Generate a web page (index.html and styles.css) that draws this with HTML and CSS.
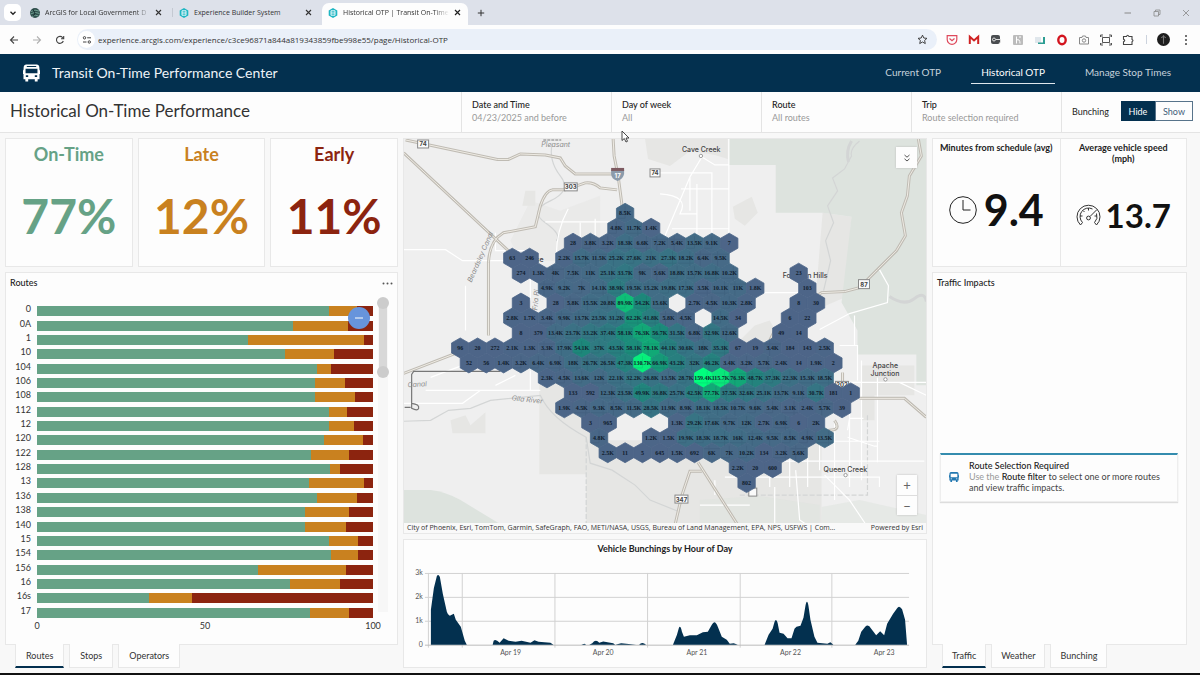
FILE: index.html
```html
<!DOCTYPE html>
<html lang="en">
<head>
<meta charset="utf-8">
<title>Historical OTP | Transit On-Time Performance Center</title>
<link rel="stylesheet" href="styles.css">
</head>
<body>
<div class="browser">
  <div class="tabstrip">
    <button class="tab-search" aria-label="Search tabs"><svg width="8" height="8" viewBox="0 0 8 8"><path d="M1.5 2.8 4 5.3 6.5 2.8" fill="none" stroke="#222" stroke-width="1.3"/></svg></button>
    <div class="btab">
      <svg class="favicon" viewBox="0 0 10 10"><circle cx="5" cy="5" r="5" fill="#2f4f4c"/><path d="M1 3.5Q5 1 9 3M.5 6Q5 3 9.5 5.5M2 8.500Q5 6 8.500 8" stroke="#7fb3a2" stroke-width=".8" fill="none"/><path d="M3 1.500 5 5 3.500 8" stroke="#14302f" fill="none"/></svg>
      <span class="btab-title faded">ArcGIS for Local Government D</span>
      <button class="x" aria-label="Close tab"><svg width="7" height="7" viewBox="0 0 7 7"><path d="M1 1 6 6M6 1 1 6" stroke="#333" stroke-width="1.1"/></svg></button>
    </div>
    <div class="btab split">
      <svg class="favicon" viewBox="0 0 10 10"><path d="M5 0 9.300 2.500V7.500L5 10 .7 7.500V2.500Z" fill="#1fb6c3"/><path d="M3 2.800H7V7.200H3ZM3 5H7" stroke="#fff" fill="none" stroke-width=".9"/></svg>
      <span class="btab-title">Experience Builder System</span>
      <button class="x" aria-label="Close tab"><svg width="7" height="7" viewBox="0 0 7 7"><path d="M1 1 6 6M6 1 1 6" stroke="#333" stroke-width="1.1"/></svg></button>
    </div>
    <div class="btab current">
      <svg class="favicon" viewBox="0 0 10 10"><path d="M5 0 9.300 2.500V7.500L5 10 .7 7.500V2.500Z" fill="#1fb6c3"/><path d="M3 2.800H7V7.200H3ZM3 5H7" stroke="#fff" fill="none" stroke-width=".9"/></svg>
      <span class="btab-title faded">Historical OTP | Transit On-Time</span>
      <button class="x" aria-label="Close tab"><svg width="7" height="7" viewBox="0 0 7 7"><path d="M1 1 6 6M6 1 1 6" stroke="#222" stroke-width="1.2"/></svg></button>
    </div>
    <button class="newtab" aria-label="New tab"><svg width="8" height="8" viewBox="0 0 8 8"><path d="M4 .8V7.200M.8 4H7.200" stroke="#333"/></svg></button>
    <div class="winctl">
      <button aria-label="Minimize"><svg width="8" height="8" viewBox="0 0 8 8"><path d="M.5 4H7" stroke="#888"/></svg></button>
      <button aria-label="Restore"><svg width="8" height="8" viewBox="0 0 8 8"><path d="M1 2.500H5.500V7H1ZM2.500 2.500V1H7V5.500H5.500" stroke="#888" fill="none" stroke-width=".8"/></svg></button>
      <button aria-label="Close window"><svg width="8" height="8" viewBox="0 0 8 8"><path d="M1 1 7 7M7 1 1 7" stroke="#888" stroke-width=".8"/></svg></button>
    </div>
  </div>
  <div class="toolbar">
    <button aria-label="Back"><svg width="10" height="10" viewBox="0 0 10 10"><path d="M9 5H1.500M5 1.500 1.500 5 5 8.500" stroke="#444" stroke-width="1.1" fill="none"/></svg></button>
    <button aria-label="Forward"><svg width="10" height="10" viewBox="0 0 10 10"><path d="M1 5H8.500M5 1.500 8.500 5 5 8.500" stroke="#b0b0b0" stroke-width="1.100" fill="none"/></svg></button>
    <button aria-label="Reload"><svg width="10" height="10" viewBox="0 0 10 10"><path d="M8.300 6A3.500 3.500 0 1 1 7.600 2.500L8.500 3.500M8.700 1V3.800H6" stroke="#444" stroke-width="1.100" fill="none"/></svg></button>
    <label class="address">
      <span class="site"><svg width="10" height="10" viewBox="0 0 10 10"><g stroke="#444" fill="none"><circle cx="2.500" cy="2.800" r="1.200"/><path d="M5.200 2.800H9M1 7H4.500"/><circle cx="7.300" cy="7" r="1.200"/></g></svg></span>
      <input class="url" type="text" aria-label="Address" value="experience.arcgis.com/experience/c3ce96871a844a819343859fbe998e55/page/Historical-OTP">
      <svg width="11" height="11" viewBox="0 0 24 24"><path d="m12 2.500 2.900 6.300 6.800.7-5.100 4.600 1.500 6.800L12 17.400l-6.100 3.500 1.500-6.800L2.300 9.500l6.800-.7Z" fill="none" stroke="#333" stroke-width="2"/></svg>
    </label>
    <div class="extensions">
      <svg viewBox="0 0 12 12"><path d="M1.200 1.700H10.800V5.500A4.800 4.800 0 0 1 1.200 5.500Z" fill="none" stroke="#df4a5c" stroke-width="1.200"/><path d="M3.500 4.500 6 6.800 8.500 4.500" fill="none" stroke="#df4a5c" stroke-width="1.200"/></svg>
      <svg viewBox="0 0 12 12"><path d="M1.800 10V2.800L6 6.500 10.200 2.800V10" fill="none" stroke="#cf2222" stroke-width="2"/></svg>
      <svg viewBox="0 0 12 12"><rect x="1" y="1" width="9" height="9" rx="2" fill="#4a4d50"/><circle cx="4" cy="5.500" r="1.500" fill="none" stroke="#fff" stroke-width=".8"/><path d="M6 5.500H10.500V8L9 10" stroke="#ddd" fill="none"/></svg>
      <svg viewBox="0 0 12 12"><rect x="1" y="1" width="10" height="10" rx="1" fill="#bcbcbc"/><path d="M4.500 2.500V9.500M4.500 6Q8 4.500 8 9.500M7 3H9" stroke="#fff" fill="none"/></svg>
      <svg viewBox="0 0 12 12"><path d="M1 3H7V9H1Z" fill="#e0e7ec"/><path d="M9 3H11V10H4V8.500H9Z" fill="#2d9e93"/></svg>
      <svg viewBox="0 0 12 12"><ellipse cx="6" cy="6" rx="3.700" ry="4.200" fill="none" stroke="#d3151f" stroke-width="2.400"/></svg>
      <svg viewBox="0 0 12 12"><path d="M1.500 3.500H4L4.500 2H7.500L8 3.500H10.500V10H1.500Z" fill="none" stroke="#888"/><circle cx="6" cy="6.500" r="1.700" fill="none" stroke="#888"/></svg>
      <svg viewBox="0 0 12 12"><path d="M2.500 3.500H9.500V8.500H2.500ZM.5 3V1H3M11.500 3V1H9M.5 9V11H3M11.500 9V11H9M1 1.500 3 3.500M11 1.500 9 3.500M1 10.500 3 8.500M11 10.500 9 8.500" fill="none" stroke="#555"/></svg>
      <svg viewBox="0 0 12 12"><path d="M1.500 2.500H4.500Q5.500 0 7 2.500H10V5.500Q12 6.500 10 7.700V10.500H1.500V7.800Q4 6.500 1.500 5.200Z" fill="none" stroke="#444" stroke-width="1.100"/></svg>
      <i class="sep"></i>
      <svg class="avatar" viewBox="0 0 12 12"><circle cx="6" cy="6" r="6" fill="#1d1d1d"/><path d="M6 2V10M4 4.500Q6 2 8 4.500" stroke="#777" fill="none"/></svg>
      <svg viewBox="0 0 12 12"><g fill="#444"><circle cx="6" cy="2" r="1"/><circle cx="6" cy="6" r="1"/><circle cx="6" cy="10" r="1"/></g></svg>
    </div>
  </div>
</div>

<header class="app-header">
  <svg class="bus" viewBox="0 0 18 18"><path fill="#fff" fill-rule="evenodd" d="M3.500 0H14.500Q17 0 17.300 3L17.500 6H18V10H17.500V15.500H15.500V18H12.500V15.500H5.500V18H2.500V15.500H.5V10H0V6H.5L.7 3Q1 0 3.500 0ZM4 1.700V2.600H14V1.700ZM2.700 4.500V9.300H15.300V4.500ZM3 11.500V13.200H5.500V11.500ZM12.500 11.500V13.200H15V11.500Z"/></svg>
  <div class="app-name">Transit On-Time Performance Center</div>
  <nav class="app-nav">
    <a href="#">Current OTP</a>
    <a href="#" class="on" aria-current="page">Historical OTP</a>
    <a href="#">Manage Stop Times</a>
  </nav>
</header>

<section class="filters">
  <h1>Historical On-Time Performance</h1>
  <button class="filter"><b>Date and Time</b><span>04/23/2025 and before</span></button>
  <button class="filter"><b>Day of week</b><span>All</span></button>
  <button class="filter"><b>Route</b><span>All routes</span></button>
  <button class="filter"><b>Trip</b><span>Route selection required</span></button>
  <div class="bunching"><span>Bunching</span><div class="toggle"><button class="on">Hide</button><button>Show</button></div></div>
  <svg class="pointer" width="9" height="13" viewBox="0 0 9 13"><path d="M1 1V10.500L3.300 8.500 5 12 6.500 11.300 5 8H8Z" fill="#fff" stroke="#333" stroke-width=".9"/></svg>
</section>

<main class="board">
  <div class="col">
    <div class="kpis">
      <div class="card kpi green"><h2>On-Time</h2><strong>77%</strong></div>
      <div class="card kpi amber"><h2>Late</h2><strong>12%</strong></div>
      <div class="card kpi red"><h2>Early</h2><strong>11%</strong></div>
    </div>
    <div class="card panel">
      <div class="panel-head"><h3>Routes</h3><button class="more" aria-label="Chart options"><svg width="11" height="3" viewBox="0 0 11 3"><g fill="#555"><circle cx="1.500" cy="1.500" r="1"/><circle cx="5.500" cy="1.500" r="1"/><circle cx="9.500" cy="1.500" r="1"/></g></svg></button></div>
      <div class="chart">
        <div class="plot">
          <div id="bars" class="bars"></div>
          <div class="axis"><span>0</span><span>50</span><span>100</span></div>
        </div>
        <div class="slider"><div class="thumb"></div></div>
        <button class="zoomout" aria-label="Zoom out"><svg width="8" height="2" viewBox="0 0 8 2"><path d="M0 1H8" stroke="#fff"/></svg></button>
      </div>
    </div>
    <div class="tabs"><button class="on">Routes</button><button>Stops</button><button>Operators</button></div>
  </div>

  <div class="col">
    <div class="card map">
      <svg class="canvas" viewBox="403 138 524 395" preserveAspectRatio="xMidYMid slice" role="img" aria-label="Map of vehicle stops around Phoenix">
        <rect x="403" y="138" width="524" height="395" fill="#efefef"/>
        <g fill="#e6e6e4">
          <path d="M539 370H600V523H586V474H539Z"/>
          <path d="M586 440H822V533H586Z"/>
          <path d="M852 216 845 297 815 310 823 212Z"/>
          <path d="M645 138H728V158L715 154 690 150 670 165 648 158Z"/>
          <path d="M733 206 752 196 758 212 745 225 735 218Z"/>
          <path d="M725 355H790L770 320 755 325Z"/>
          <path d="M862 365H915V395H875V420H862Z"/>
          <path d="M510 240 530 200 560 210 600 195V260H520Z" opacity=".5"/>
          <path d="M525 190H535V205H522ZM450 420 465 415 470 425 485 412V433H452Z"/>
        </g>
        <g fill="#dde3de">
          <path d="M729 138H927V385H917V354H858V330L842 302 852 216 823 212H776V164H729Z"/>
          <path d="M403 490H430Q446 492 460 500L498 523V533H403Z"/>
          <path d="M822 507 860 500 927 515V533H822Z" opacity=".5"/>
          <path d="M700 500 760 496 820 505V533H700Z" opacity=".5"/>
        </g>
        <g fill="none" stroke="#d3d5d5" stroke-width="1.200">
          <path d="M552 142Q548 160 560 175T550 200 545 222 556 240"/>
          <path d="M860 140Q850 148 852 155L845 168 833 177 838 190 828 205 834 222 826 240 831 260 824 290"/>
          <path d="M403 421 430 420 448 410 470 408 490 400 540 395Q550 418 586 437L590 463 612 470 635 485 650 500 680 512"/>
          <path d="M890 296Q905 306 915 298T927 301" stroke-width="3"/>
          <path d="M852 140Q846 150 849 161" stroke-width="3"/>
          <path d="M586 437V523M868 415V495H740" stroke-dasharray="5 2"/>
        </g>
        <g fill="none" stroke="#fff" stroke-width="1.200">
          <path d="M403 249H445L462 260H510M729 138V300M660 172H712V232M681 188H729M672 228H729M690 176 665 235M702 156 690 176V210M697 183V235M660 193Q690 195 680 213H697M702 156 715 164H729"/>
          <path d="M465 285V330M545 221H620M556 255Q556 230 568 208M580 222V255M595 218V240M530 258V300M495 232V250H530"/>
          <path d="M740 292H800M880 269 889 285 888 302 850 313 820 329M855 315V345"/>
          <path d="M403 403H462L480 390H520M425 390H540M430 377 462 365M495 385 515 375M530 370V390"/>
          <path d="M725 477H880V487M740 461H925M733 441H880M770 450V487M790 440V487M808 455V487M820 437V470M835 420V500M850 400V487M862 360V480M878 377V462M715 480V495M775 487V533M700 505H750M848 437 875 446H878M850 382H927M840 345H858V380M864 418H850L848 430M900 382 927 395"/>
          <path d="M825 475 850 500 870 530M796 470 800 520 815 530"/>
        </g>
        <g class="roads casing">
          <path id="r1" d="M405 139 497 158.500H508L520 153 545 154 560 157 565 165 575 173H614"/>
          <path id="r2" d="M403 152 509 251M403 373 455 353"/>
          <path id="r3" d="M488 335V262Q489 240 503 232L535 226 540 205Q545 190 552 189H565L585 182Q593 181 600 187L617 189"/>
          <path id="r4" d="M613 138 614 155 618 175 622 205"/>
          <path id="r5" d="M919 138 922 155 910 175 908 195 902 212 906 235 897 250 878 269 860 287 845 291 822 292 795 310"/>
          <path id="r6" d="M675 525 682 495 690 471H702M698 462 738 525M860 398H905L927 417M835 420Q842 430 830 430L822 440M770 340 775 330M843 372V385"/>
        </g>
        <g class="roads fill"><use href="#r1"/><use href="#r2"/><use href="#r3"/><use href="#r4"/><use href="#r5"/><use href="#r6"/></g>
        <path d="M404 407H410M411 408V403Q419 404 418 408 417 411 411 408ZM411 403V374L413 371H500" fill="none" stroke="#777" stroke-width="1.200"/>
        <g class="river">
          <text x="541" y="146">Pleasant</text>
          <text transform="translate(471 282) rotate(-66)">Beardsley Canal</text>
          <text transform="translate(407 387) rotate(-4)">Canal</text>
          <text transform="translate(511 400) rotate(6)">Gila River</text>
          <text transform="translate(537 310) rotate(-85)">Fria Ri</text>
        </g>
        <path d="M543 139H561" stroke="#a3a3a3" stroke-width="1.500" stroke-dasharray="3 1"/>
        <g class="place">
          <text x="682" y="151">Cave Creek</text>
          <text x="783" y="277">Fountain Hills</text>
          <text x="873" y="368">Apache</text><text x="871" y="376">Junction</text>
          <text x="824" y="472">Queen Creek</text>
          <text x="515" y="261">Surprise</text>
        </g>
        <g fill="#fff" stroke="#888" stroke-width=".8"><circle cx="701" cy="155" r="1.700"/><circle cx="886" cy="379" r="1.700"/><circle cx="846" cy="475" r="1.700"/></g>
        <g class="shield">
          <rect x="417" y="139" width="11" height="8"/><text x="422.500" y="145.500">74</text>
          <rect x="650" y="168" width="10" height="8"/><text x="655" y="174.500">74</text>
          <rect x="564" y="182" width="13" height="8"/><text x="570.500" y="188.500">303</text>
          <rect x="859" y="279" width="11" height="9"/><text x="864.500" y="286">87</text>
          <rect x="675" y="495" width="13" height="8"/><text x="681.500" y="501.500">347</text>
          <rect x="836" y="381" width="13" height="7"/><text x="842.500" y="387">202</text>
          <rect x="749" y="488" width="8" height="8"/>
        </g>
        <path d="M611 169H624V173Q623 178 617.500 180 611 178 611 173Z" fill="#8c9bab"/><path d="M611 167H624V170H611Z" fill="#7d5a60"/><text x="617.500" y="177" class="interstate">17</text>
        <g id="hexes"></g>
        <g id="streets" class="streets"></g>
        <g id="counts" class="counts"></g>
      </svg>
      <button class="expand" aria-label="Expand legend"><svg width="10" height="10" viewBox="0 0 10 10"><path d="M2.500 2 5 4.200 7.500 2M2.500 5.800 5 8 7.500 5.800" fill="none" stroke="#555"/></svg></button>
      <div class="mapzoom"><button aria-label="Zoom in">+</button><button aria-label="Zoom out">−</button></div>
      <div class="credit"><span>City of Phoenix, Esri, TomTom, Garmin, SafeGraph, FAO, METI/NASA, USGS, Bureau of Land Management, EPA, NPS, USFWS | Com…</span><span>Powered by Esri</span></div>
    </div>
    <div class="card hourly">
      <h3>Vehicle Bunchings by Hour of Day</h3>
      <svg viewBox="403 562 524 98" role="img" aria-label="Area chart of bunchings by hour">
        <path d="M424 573.500H910M424 597.500H910M424 621.500H910M427.500 573V648M461.500 573V648M554.500 573V648M647.500 573V648M740.500 573V648M832.500 573V648" stroke="#d2d2d2" fill="none"/>
        <path d="M424 645.500H910" stroke="#bbb"/>
        <path fill="#03304f" d="M430 645V610L433 588 436 576Q437.500 573.500 439 577L442 594 446 612Q448 617 450 615.500L453 614 455 620 460 627 464 641 466 645Z
          M492 645 493 641Q495 639 499 643L503 638.500 508 641 515 642 521 641 530 643 534 640.500 538 642 550 643 553 645Z
          M581 645 584 644 586 645ZM589 645 592 643.500Q595.500 639 599 643L603 641.800 613 643.500 615 645 621 643.500 636 645ZM639 645Q642 641.500 646 645Z
          M673 645 677 635 679 628Q680.500 625 682 632L684 637 690 635.500H697L703 632.500 708 632 712 625Q715 619 718 627L722 637 727 640 730 644 734 643.500 738 645Z
          M765 645 769 635 773 629 775 622Q776.500 618 778 623L780 633 784 634 788 638.500H792L795 629 797 627 801 626 804 618 806 606Q807.500 598 809 606L811 620 815 637 818 643 828 644 831 642.500 834 645Z
          M856 645 859 641 862 632 866 627Q869 623.500 872 629L877 635.500 881 631.500 885 635.500 888 624 894 614 898 608.500Q900 605 903 609.500L906 620 908 645Z"/>
        <g class="ticks"><g text-anchor="end"><text x="422" y="575">3k</text><text x="422" y="599">2k</text><text x="422" y="623">1k</text><text x="422" y="647">0</text></g>
        <g text-anchor="middle"><text x="510" y="655">Apr 19</text><text x="603" y="655">Apr 20</text><text x="697" y="655">Apr 21</text><text x="791" y="655">Apr 22</text><text x="885" y="655">Apr 23</text></g></g>
      </svg>
    </div>
  </div>

  <div class="col">
    <div class="card stats">
      <div class="stat"><h4>Minutes from schedule (avg)</h4><div class="value large"><svg width="28" height="28" viewBox="0 0 28 28"><circle cx="14" cy="14" r="13.300" fill="none" stroke="#222"/><path d="M14 4V14H21.500" fill="none" stroke="#222"/></svg><strong>9.4</strong></div></div>
      <div class="stat"><h4>Average vehicle speed (mph)</h4><div class="value"><svg width="25" height="25" viewBox="0 0 25 25"><g fill="none" stroke="#333"><path d="M4.500 22A11.500 11.500 0 1 1 20.500 22M6.500 19.500A8.500 8.500 0 0 1 16.500 6M20.500 10.500A8.500 8.500 0 0 1 18.500 19.500M4.500 22 6.500 19.500M20.500 22 18.500 19.500M12.500 5V7.500M7 7.500 8.500 9M4 13H6.500M21 13H18.500"/><circle cx="12.500" cy="15" r="1.900"/><path d="M14 13.500 21 6.500"/></g></svg><strong>13.7</strong></div></div>
    </div>
    <div class="card panel impacts">
      <h3>Traffic Impacts</h3>
      <div class="notice">
        <svg width="10" height="10" viewBox="0 0 18 18"><path fill="#2277b0" fill-rule="evenodd" d="M3.500 0H14.500Q17 0 17.300 3V6H18V10H17.300V15.500H15.500V18H12.500V15.500H5.500V18H2.500V15.500H.7V10H0V6H.7V3Q1 0 3.500 0ZM3 3V9.500H15V3ZM3 11.500V13.200H5.500V11.500ZM12.500 11.500V13.200H15V11.500Z"/></svg>
        <div><b>Route Selection Required</b><p><i>Use the</i> <b>Route filter</b> to select one or more routes and view traffic impacts.</p></div>
      </div>
    </div>
    <div class="tabs compact"><button class="on">Traffic</button><button>Weather</button><button>Bunching</button></div>
  </div>
</main>
<script src="script.js"></script>
</body>
</html>
```

FILE: styles.css
```css
* { box-sizing: border-box; }
body { margin: 0; min-height: 100vh; display: flex; flex-direction: column; background: #f8f8f8; color: #333; font-family: Lato, "Open Sans", sans-serif; font-size: 10px; border-bottom: 2px solid #111; }
button, input { font: inherit; color: inherit; border: 0; background: none; padding: 0; margin: 0; }
button { cursor: pointer; }
h1, h2, h3, h4, p { margin: 0; font-weight: 400; }
svg { flex: none; display: block; }

/* Browser frame */
.browser { font-family: "Open Sans", "Noto Sans", sans-serif; font-size: 8px; }
.tabstrip { display: flex; align-items: stretch; height: 25px; background: #dde1ea; padding-left: 4px; }
.tab-search { width: 17px; height: 17px; margin: 4px 0; border-radius: 5px; background: #fff; display: grid; place-items: center; }
.btab { display: flex; align-items: center; width: 150px; padding: 0 10px 0 6px; gap: 5px; }
.tab-search + .btab { padding-left: 9px; width: 151px; }
.btab.split { border-left: 1px solid #c4c9d2; border-image: linear-gradient(transparent 32%, #c4c9d2 32% 68%, transparent 68%) 1; }
.btab.current { background: #fdfdfd; border-radius: 7px 7px 0 0; margin-top: 3px; padding: 0 7px 3px 6px; width: 146px; }
.favicon { width: 10px; height: 10px; }
.btab-title { flex: 1; white-space: nowrap; overflow: hidden; font-size: 7px; color: #333; }
.faded { -webkit-mask-image: linear-gradient(90deg, #000 86%, transparent); mask-image: linear-gradient(90deg, #000 86%, transparent); }
.newtab { width: 25px; display: grid; place-items: center; }
.winctl { margin-left: auto; display: flex; align-items: center; gap: 21px; padding-right: 10px; }
.toolbar { display: flex; align-items: center; height: 29px; background: #fdfdfd; padding: 0 8px; gap: 12px; }
.toolbar > button { width: 11px; display: grid; place-items: center; }
.address { flex: 1; display: flex; align-items: center; height: 21px; border-radius: 11px; background: #eaf0f9; padding: 0 9px 0 1px; gap: 3px; }
.site { width: 17px; height: 17px; border-radius: 50%; background: #fff; display: grid; place-items: center; }
.url { flex: 1; min-width: 0; outline: 0; color: #333; }
.extensions { display: flex; align-items: center; gap: 10px; }
.extensions svg { width: 12px; height: 12px; }
.address + .extensions { margin-left: -3px; }
.extensions .avatar { width: 13px; height: 13px; }
.sep { width: 1px; height: 9px; background: #ccd3dd; margin-left: 2px; }

/* Application header */
.app-header { display: flex; align-items: center; height: 38px; background: #03304f; color: #eef3f7; padding: 0 11px 0 23px; }
.bus { width: 17px; height: 18px; }
.app-name { font-size: 14px; margin-left: 12px; padding-bottom: 2px; }
.app-nav { margin-left: auto; display: flex; font-size: 10px; }
.app-nav a { color: #c6d2dc; text-decoration: none; padding: 3px 16px 4px; line-height: 14px; border-bottom: 1px solid transparent; }
.app-nav a:last-child { padding-right: 18px; }
.app-nav a.on { color: #fff; border-color: #dfe7ed; padding: 3px 10px 4px; margin: 0 14px; }

/* Filter bar */
.filters { position: relative; display: grid; grid-template-columns: 1fr repeat(4, 150px) 139px; height: 41px; background: #fdfdfd; border-bottom: 1px solid #e4e4e4; }
.filters h1 { font-size: 17px; align-self: center; padding: 0 0 3px 10px; }
.filter { display: flex; flex-direction: column; justify-content: center; text-align: left; border-left: 1px solid #e4e4e4; padding: 0 10px 2px; line-height: 13px; font-size: 9px; }
.filter b { font-weight: 500; color: #222; }
.filter span { color: #999; }
.bunching { display: flex; align-items: center; justify-content: space-between; border-left: 1px solid #e4e4e4; padding: 0 7px 2px 10px; color: #222; font-size: 9px; }
.toggle { display: flex; }
.toggle button { height: 20px; width: 38px; border: 1px solid #57738a; color: #3f5f7a; font-size: 9px; }
.toggle .on { width: 34px; background: #03304f; color: #fff; border-color: #03304f; }
.pointer { position: absolute; left: 621px; top: 38px; z-index: 5; }

/* Dashboard grid */
.board { flex: 1; display: grid; grid-template-columns: 393fr 524fr 255fr; gap: 5px; padding: 5px 13px 5px 5px; }
.col { display: flex; flex-direction: column; gap: 5px; min-width: 0; }
.card { background: #fdfdfd; border: 1px solid #e8e8e8; }
.kpis { display: grid; grid-template-columns: repeat(3, 1fr); gap: 5px; height: 129px; }
.kpi { text-align: center; padding-top: 5px; }
.kpi h2 { font-size: 18px; line-height: 20px; font-weight: 700; }
.kpi strong { display: block; font-size: 48px; line-height: 54px; margin-top: 25px; font-weight: 700; }
.green { color: #66a286; }
.amber { color: #c9811f; }
.red { color: #8c240f; }
.panel { flex: 1; display: flex; flex-direction: column; padding: 4px 4px 12px 4px; }
.panel-head { display: flex; justify-content: space-between; align-items: center; }
h3 { font-size: 9px; line-height: 12px; font-weight: 500; color: #222; }
.chart { position: relative; flex: 1; display: flex; margin-top: 12px; }
.plot { flex: 1; display: flex; flex-direction: column; }
.bars { flex: 1; display: flex; flex-direction: column; padding-top: 3px; }
.row { flex: 1; display: flex; align-items: center; }
.row span { width: 27px; padding: 0 6px 4px 0; text-align: right; font-size: 9px; line-height: 10px; }
.stack { flex: 1; height: 10px; display: flex; background: #8c240f; }
.ok { background: #66a286; }
.late { background: #c9811f; }
.axis { display: flex; justify-content: space-between; font-size: 9px; line-height: 12px; margin-left: 18px; margin-right: -9px; }
.axis span { width: 18px; text-align: center; }
.slider { width: 10px; margin: 0 5px 20px 5px; background: #f7f7f7; }
.thumb { position: relative; width: 8px; height: 69px; margin: 2px 1px; background: #d8d8d8; }
.thumb::before, .thumb::after { content: ""; position: absolute; left: -2px; width: 12px; height: 12px; border-radius: 50%; background: #ccc; }
.thumb::before { top: -6px; }
.thumb::after { bottom: -6px; }
.zoomout { position: absolute; right: 23px; top: 6px; width: 22px; height: 22px; border-radius: 50%; background: #6794dc; display: grid; place-items: center; }
.tabs { display: flex; gap: 5px; margin-top: -6px; padding-left: 10px; height: 24px; }
.tabs button { position: relative; background: #fdfdfd; border: 1px solid #e8e8e8; border-top: 0; padding: 0 10px; font-size: 9px; }
.tabs.compact button { padding: 0 9px; }
.tabs .on { border-bottom: 2px solid #03304f; }

/* Map */
.map { position: relative; flex: 1; min-height: 0; }
.canvas { position: absolute; width: 100%; height: 100%; }
.roads { fill: none; }
.casing { stroke: #bfbbb3; stroke-width: 3; }
.roads.fill { stroke: #efece5; stroke-width: 1; }
.river { font: italic 7px Inter, sans-serif; fill: #8b8b8b; }
.place { font: 500 7px Inter, sans-serif; fill: #444; }
.shield rect { fill: #fafafa; stroke: #888; stroke-width: 1; }
.shield text { font: 700 6px Inter, sans-serif; fill: #444; text-anchor: middle; }
.interstate { font: 700 6px Inter, sans-serif; fill: #fff; text-anchor: middle; }
.streets { fill: none; stroke: #1f3350; stroke-width: 1; opacity: .12; }
.counts { font: 700 6px "Liberation Serif", serif; fill: #101c2c; text-anchor: middle; }
.expand { position: absolute; right: 9px; top: 8px; width: 21px; height: 21px; background: #fdfdfd; box-shadow: 0 0 2px #bbb; display: grid; place-items: center; }
.mapzoom { position: absolute; right: 9px; bottom: 18px; display: flex; flex-direction: column; box-shadow: 0 0 2px #bbb; }
.mapzoom button { width: 20px; height: 20px; background: #fdfdfd; font-size: 13px; line-height: 18px; color: #666; }
.mapzoom button + button { border-top: 1px solid #ddd; }
.credit { position: absolute; left: 0; right: 0; bottom: 0; display: flex; justify-content: space-between; gap: 8px; padding: 0 3px; background: #f9f9f9; font-family: "Open Sans", sans-serif; font-size: 7px; line-height: 10px; white-space: nowrap; }
.hourly { padding-top: 3px; height: 129px; }
.hourly h3, .stat h4 { font-weight: 700; text-align: center; }
.hourly svg { width: 100%; height: auto; margin-top: 7px; }
.ticks { font-size: 7px; fill: #555; }

/* Right column */
.stats { display: grid; grid-template-columns: 1fr 1fr; height: 129px; }
.stat { padding: 3px 4px 0; display: flex; flex-direction: column; color: #111; }
.stat + .stat { border-left: 1px solid #e8e8e8; }
.stat h4 { font-size: 9px; line-height: 11px; color: #222; white-space: nowrap; }
.stat + .stat h4 { white-space: normal; padding: 0 12px; }
.value { flex: 1; display: flex; align-items: center; justify-content: center; gap: 5px; font-size: 33px; }
.value.large { font-size: 43px; gap: 7px; }
.value strong { line-height: 1; }
.notice { display: flex; align-items: center; gap: 10px; margin: 164px 4px 0 3px; padding: 5px 8px 8px; border: 1px solid #eee; border-top: 2px solid #348cae; box-shadow: 0 1px 1px #ddd; font-size: 9px; line-height: 11px; color: #444; }
.notice b { font-weight: 500; color: #222; }
.notice i { font-style: normal; color: #999; }
```

FILE: script.js
```js
// Routes: label, on-time share, late share; the rest is early.
const routes = [
  ["0", 86.8, 8.3], ["0A", 76.1, 16.5], ["1", 62.8, 34.5], ["10", 73.8, 14.5], ["104", 83.3, 4.1],
  ["106", 82.7, 9.1], ["108", 82.7, 12], ["112", 86.8, 5.4], ["12", 86.8, 7.6], ["120", 85.3, 11.7],
  ["122", 81.5, 11.5], ["128", 87.3, 3], ["13", 80.9, 16.3], ["136", 83.2, 11.9], ["138", 79.8, 13.1],
  ["140", 79.8, 12.2], ["15", 86.9, 8.7], ["154", 87.4, 8.2], ["156", 65.9, 26], ["16", 75.4, 14.9],
  ["16s", 33.4, 12.6], ["17", 81.2, 11.7]
];
document.getElementById("bars").innerHTML = routes.map(([name, ok, late]) =>
  `<div class="row"><span>${name}</span><div class="stack"><div class="ok" style="width:${ok}%"></div><div class="late" style="width:${late}%"></div></div></div>`
).join("");

// Hex bins: each run is [row, first half-column, values]; "-" is an empty cell.
const runs = [
  [0, 0, "8.5K"],
  [1, -1, "4.8K 11.7K 1.4K"],
  [2, -6, "28 3.8K 3.2K 18.3K 6.6K 7.2K 5.4K 13.5K 9.1K 7"],
  [3, -13, "63 246 - 2.2K 15.7K 11.5K 25.2K 27.6K 21K 27.3K 18.2K 6.4K 9.5K"],
  [4, -12, "274 1.3K 4K 7.5K 11K 25.1K 33.7K 9K 5.6K 18.8K 15.7K 16.8K 10.2K - - - 23"],
  [5, -9, "4.9K 9.2K 7K 14.1K 38.9K 19.5K 15.2K 19.8K 17.3K 3.5K 10.1K 11K 1.8K - - 103"],
  [6, -12, "3 - 28 5.8K 15.5K 20.8K 89.9K 54.2K 15.6K - 2.7K 4.5K 10.3K 2.8K - - 8 30"],
  [7, -13, "2.8K 1.7K 3.4K 9.9K 13.7K 23.5K 31.2K 62.2K 41.8K 5.8K 4.5K - 14.5K 34 - - 6 22"],
  [8, -12, "8 379 13.4K 23.7K 33.2K 37.4K 58.1K 76.3K 56.7K 31.5K 6.8K 32.9K 12.6K - - 49 14"],
  [9, -19, "96 20 272 2.1K 1.3K 3.3K 17.9K 54.1K 37K 43.5K 58.1K 78.1K 44.1K 30.6K 18K 35.3K 67 19 3.4K 184 143 2.5K"],
  [10, -18, "52 56 1.4K 3.2K 6.4K 6.9K 18K 26.7K 26.5K 47.3K 130.7K 66.9K 43.2K 32K 46.2K 3.4K 3.2K 5.7K 2.4K 14 1.9K 2"],
  [11, -9, "2.3K 4.5K 13.6K 12K 22.1K 32.2K 26.8K 13.5K 28.7K 159.4K 115.7K 76.3K 48.7K 37.3K 22.3K 15.3K 18.5K"],
  [12, -6, "133 592 12.3K 23.5K 49.9K 36.8K 25.7K 42.5K 77.7K 37.5K 32.6K 25.1K 13.7K 9.1K 30.7K 181 1"],
  [13, -7, "1.9K 4.5K 9.3K 8.5K 11.5K 28.5K 11.9K 8.9K 18.1K 18.5K 10.7K 9.6K 5.4K 3.1K 2.4K 5.7K 39"],
  [14, -4, "3 965 - - - 1.3K 29.2K 17.6K 9.7K 12K 2.7K 6.9K 6 2K"],
  [15, -3, "4.8K - - 1.2K 1.5K 19.9K 18.3K 18.7K 16K 12.4K 9.5K 8.5K 4.9K 13.5K"],
  [16, -2, "2.5K 11 5 645 1.5K 692 6K 7K 10.2K 134 3.2K 5.6K"],
  [17, 13, "2.2K 20 600"],
  [18, 14, "802"]
];
const stops = [[0, 77, 101, 136], [30, 54, 116, 132], [55, 28, 136, 122], [80, 16, 172, 118], [110, 10, 228, 122], [160, 0, 255, 125]];
function shade(v) {
  let i = 1;
  while (i < stops.length - 1 && v > stops[i][0]) i++;
  const a = stops[i - 1], b = stops[i], t = Math.min(1, (v - a[0]) / (b[0] - a[0]));
  return "rgb(" + [1, 2, 3].map(k => Math.round(a[k] + (b[k] - a[k]) * t)).join() + ")";
}
let hexes = "", counts = "", streets = "";
runs.forEach(([row, first, values]) => values.split(" ").forEach((label, i) => {
  if (label === "-") return;
  const x = 625 + (first + i * 2) * 8.7, y = 212.5 + row * 15;
  const v = parseFloat(label) / (label.endsWith("K") ? 1 : 1000);
  hexes += `<path fill="${shade(v)}" stroke="${shade(v)}" stroke-width=".8" d="M${x} ${y - 10}l8.7 5v10l-8.7 5l-8.7 -5v-10Z"/>`;
  counts += `<text x="${x}" y="${y + 2}">${label}</text>`;
  const n = (row * 7 + first + i * 5 + 40) % 6;
  if (v > 3) streets += n < 2 ? `<path d="M${x - 8} ${y - 4}h16M${x - 3} ${y - 7}v15"/>` : n < 4 ? `<path d="M${x + 4} ${y - 7}v15M${x - 8} ${y + 5}h16"/>` : `<path d="M${x - 8} ${y + 5}h8v-12"/>`;
}));
document.getElementById("hexes").innerHTML = hexes;
document.getElementById("counts").innerHTML = counts;
document.getElementById("streets").innerHTML = streets;
```
